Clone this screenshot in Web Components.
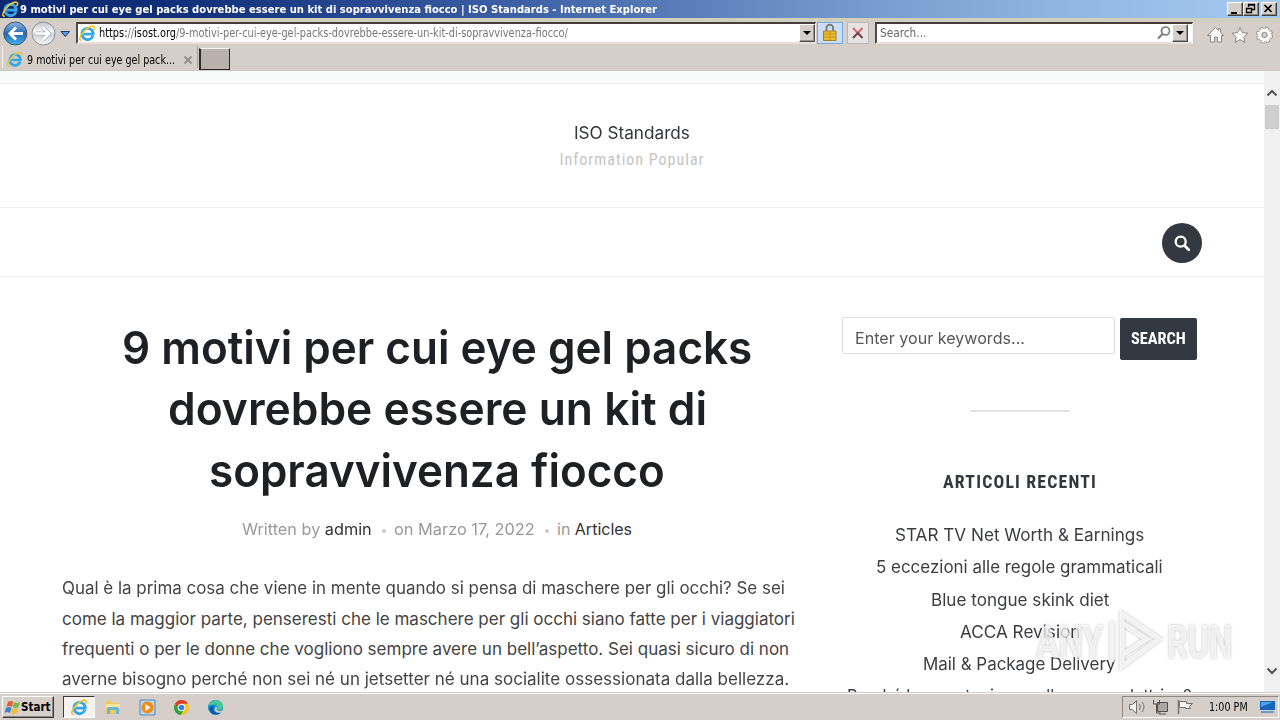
<!DOCTYPE html>
<html lang="it"><head><meta charset="utf-8"><title>ISO Standards</title>
<style>html,body{margin:0;height:100%;overflow:hidden}</style></head><body>
<desktop-screen></desktop-screen>
<script>
const define=(name,html,setup)=>customElements.define(name,class extends HTMLElement{
  constructor(){super();this.attachShadow({mode:'open'}).innerHTML=html}
  connectedCallback(){if(setup)setup(this)}
});

define('desktop-screen',`<style>
:host{display:flex;flex-direction:column;width:1280px;height:720px;overflow:hidden;background:#d5cec9;font-family:"DejaVu Sans Condensed","DejaVu Sans",sans-serif;color:#000}
.view{display:flex;height:621px;flex:none;background:#fff}
</style><title-bar></title-bar><address-row></address-row><tab-row></tab-row>
<div class="view"><site-page></site-page><scroll-bar></scroll-bar></div><task-bar></task-bar>`);

define('ie-logo',`<style>:host{display:block;width:17px;height:17px;flex:none}svg{display:block;width:100%;height:100%}</style>
<svg viewBox="0 0 18 18"><path d="M14.800 11.500A6 6 0 1 1 15 8.300V9.600H5" fill="none" stroke="#35a7e6" stroke-width="3"/><path d="M3 16C-1 17 1 11 6 6S16 0 16.500 2.500c.2.8-.2 1.800-.9 3" fill="none" stroke="#f0c238" stroke-width="1.700"/></svg>`);

define('title-bar',`<style>
:host{display:flex;height:18px;flex:none;align-items:center;box-sizing:border-box;padding:0 3px 0 2px;background:linear-gradient(90deg,#0b276f 0,#12307b 15%,#3c5fa5 40%,#6d91c6 62%,#8fb4e0 82%,#a6caf0);color:#fff;font:bold 11px "DejaVu Sans Condensed","DejaVu Sans",sans-serif}
fit-text{margin-left:1px;margin-right:auto}
b{display:block;width:16px;height:14px;box-sizing:border-box;background:#d5cec9;border:1px solid;border-color:#fff #404040 #404040 #fff;box-shadow:inset -1px -1px #8b8580}
b:last-child{margin-left:2px}svg{display:block;width:13px;height:12px}
</style><ie-logo></ie-logo><fit-text w="637">9 motivi per cui eye gel packs dovrebbe essere un kit di sopravvivenza fiocco | ISO Standards - Internet Explorer</fit-text>
<b><svg viewBox="0 0 13 12"><path d="M3 9h6v2H3z"/></svg></b>
<b><svg viewBox="0 0 13 12"><path d="M4.500 4V1.500h6v5H8M4 2h7M2.500 5.500h5v4h-5zM2 5.500h6" fill="none" stroke="#000" stroke-width="1.300"/></svg></b>
<b><svg viewBox="0 0 13 12"><path d="M2.500 2l7 7m0-7l-7 7" stroke="#000" stroke-width="1.700"/></svg></b>`);

define('address-row',`<style>
:host{display:flex;height:28px;flex:none;box-sizing:border-box;padding:2px 7px 0 3px;align-items:flex-start;font-size:11.500px;background:linear-gradient(#d2cfbd 0 3px,#d5cec9 4px)}
svg{display:block;flex:none}
.field{display:flex;height:22px;box-sizing:border-box;background:#fff;border:solid;border-width:2px 1px 2px 2px;border-color:#493b3b #f6f2ef #e8e0dc #514848;margin-top:2px;align-items:center}
.drop{width:16px;height:18px;box-sizing:border-box;background:#d5cec9;border:1px solid;border-color:#fff #514b48 #514b48 #fff;box-shadow:inset -1px -1px #99918c}
.url{width:740px;margin-left:6px;padding-left:1px;color:#777}.url i{font-style:normal;color:#000}
.search{width:318px;margin-left:6px;padding-left:3px;color:#666}
.btn{width:26px;height:22px;box-sizing:border-box;margin:2px 0 0 1px;border:1px solid #77a9dc;background:#c9dff8}
.stop{width:22px;margin-left:4px;border-color:#b9b6b8;background:#e7e3e4}
.push{margin-left:auto}
</style>
<svg width="54" height="26" viewBox="0 0 54 26"><defs><linearGradient id="g" x2="0" y2="1"><stop stop-color="#8eb6df"/><stop offset=".5" stop-color="#2569b8"/><stop offset="1" stop-color="#42b5ee"/></linearGradient><linearGradient id="h" x2="0" y2="1"><stop stop-color="#bfc2c8"/><stop offset=".4" stop-color="#f4f6f8"/><stop offset=".55" stop-color="#ccd3da"/><stop offset="1" stop-color="#f4f7f9"/></linearGradient></defs>
<circle cx="12.300" cy="13.500" r="11.500" fill="url(#g)" stroke="#40546f"/><path d="M20 13.500H7m6-6l-6 6 6 6" fill="none" stroke="#fff" stroke-width="3"/><circle cx="40.500" cy="13.500" r="11.500" fill="url(#h)" stroke="#8b929b"/><path d="M33 13.500h13m-6-6l6 6-6 6" fill="none" stroke="#a9afb6" stroke-width="4"/><path d="M33 13.500h13m-6-6l6 6-6 6" fill="none" stroke="#fff" stroke-width="2.600"/></svg>
<svg width="13" height="26" viewBox="0 0 13 26"><path d="M4 11.500h8.500l-4.200 5z" fill="#5a9ae0" stroke="#12407b"/></svg>
<div class="field url"><ie-logo></ie-logo><fit-text w="469" style="margin:0 auto 0 3px"><i>https:</i>//<i>isost.org</i>/9-motivi-per-cui-eye-gel-packs-dovrebbe-essere-un-kit-di-sopravvivenza-fiocco/</fit-text>
<svg class="drop" viewBox="0 0 14 16"><path d="M3 6h8l-4 4z"/></svg></div>
<svg class="btn" viewBox="0 0 24 20"><path d="M8.500 8V5a3.300 3.300 0 0 1 6.600 0v3" fill="none" stroke="#77726a" stroke-width="1.700"/><path d="M5.500 8h12.500v9.500H5.500z" fill="#edba22" stroke="#a98029"/><path d="M6 11h12M6 14h12M12 8v9" stroke="#c7962c"/></svg>
<svg class="btn stop" viewBox="0 0 20 20"><path d="M5 5l4.800 5 4.700-5" fill="none" stroke="#d96c6c" stroke-width="2"/><path d="M5 15l4.800-5 4.700 5" fill="none" stroke="#743f45" stroke-width="2"/></svg>
<div class="field search"><fit-text w="46">Search...</fit-text><svg class="push" width="16" height="16" viewBox="0 0 16 16"><circle cx="9.500" cy="6" r="4" fill="none" stroke="#817b7b" stroke-width="1.700"/><path d="M6.500 9L2 13.500" stroke="#817b7b" stroke-width="2.200"/></svg><svg class="drop" style="margin-right:4px" viewBox="0 0 14 16"><path d="M3 6h8l-4 4z"/></svg></div>
<svg class="push" width="68" height="26" viewBox="0 0 68 26" fill="#fff" stroke="#8c8683"><path d="M2.500 15.500l8-8 3 3V8.500h2v4l3 3h-2v6.500h-4v-5h-3v5h-4v-6.500z"/><path d="M35 7.500l2.300 5.300 5.700.5-4.300 3.800 1.300 5.400-5-3-5 3 1.300-5.400-4.300-3.800 5.700-.5z"/><circle cx="59.500" cy="15" r="6" stroke="#8c8683" stroke-width="5" stroke-dasharray="2.900 1.810"/><circle cx="59.500" cy="15" r="6" stroke="#fff" stroke-width="3.400" stroke-dasharray="1.900 2.810" stroke-dashoffset="-.5"/><circle cx="59.500" cy="15" r="4.500" stroke="#fff" stroke-width="3" fill="none"/><circle cx="59.500" cy="15" r="2.700" fill="#d5cec9" stroke="#8c8683"/></svg>`,el=>{
  // The flex row shares its width with the buttons; keep the controls from shrinking.
  el.shadowRoot.querySelectorAll('.field').forEach(f=>f.style.flex='none');
});

define('tab-row',`<style>
:host{display:flex;height:25px;flex:none;padding-left:2px;box-sizing:border-box;align-items:flex-start;font-size:11.500px;border-bottom:1px solid #d0c9c4}
.tab{width:196px;height:22px;display:flex;align-items:center;box-sizing:border-box;border-left:1px solid #f5f1ee;border-right:1px solid #aaa19c;padding:5px 4px 0 4px}
.new{width:31px;height:22px;box-sizing:border-box;border:1px solid #2c2828;border-width:1px 1px 1px 2px;border-top-color:#f8f4f2;background:#bab1ac;margin-left:1px;margin-top:2px}
svg{margin-left:auto}
</style><div class="tab"><ie-logo style="width:16px"></ie-logo><fit-text w="148" style="margin-left:4px">9 motivi per cui eye gel pack...</fit-text><svg width="10" height="10" viewBox="0 0 10 10"><path d="M1.500 1.500l7 7m0-7l-7 7" stroke="#918b88" stroke-width="1.800"/></svg></div><div class="new"></div>`);

define('scroll-bar',`<style>:host{display:flex;flex-direction:column;width:16px;background:#f0f0f0;height:621px}.up{margin-top:12px;height:22px}.thumb{height:24px;background:#cdcdcd;margin:0 1px 0 1px}.down{margin-top:auto;height:29px}svg{display:block}</style>
<svg class="up" width="16" height="22" viewBox="0 0 16 22"><path d="M3.500 12.500L8 8l4.500 4.500" fill="none" stroke="#555" stroke-width="2"/></svg><div class="thumb"></div><svg class="down" width="16" height="29" viewBox="0 0 16 29"><path d="M3.500 5.500L8 10l4.500-4.500" fill="none" stroke="#555" stroke-width="2"/></svg>`);

define('site-page',`<style>
:host{display:block;position:relative;width:1264px;height:621px;overflow:hidden;background:#fff;font-family:Inter,sans-serif;color:#34363d}
.strip{height:12px;background:#f9fafa;border-bottom:1px solid #ececec}
header{height:123px;border-bottom:1px solid #ececec;display:flex;flex-direction:column;align-items:center;box-sizing:content-box}
.name{font-size:17px;line-height:24px;margin-top:37px}
.tag{font:16px/24px "Roboto Condensed",Roboto,sans-serif;color:#c5c5c5;margin-top:3px;letter-spacing:1px}
nav{height:68px;border-bottom:1px solid #ececec;display:flex;justify-content:flex-end;align-items:center;padding-right:62px}
nav svg{display:block;margin-top:2px}
.cols{display:flex;padding-left:62px;gap:30px}
any-run{position:absolute;left:1036px;top:533px}
</style><div class="strip"></div><header><fit-text class="name" w="116">ISO Standards</fit-text><fit-text class="tag" w="145">Information Popular</fit-text></header>
<nav><svg width="40" height="40" viewBox="0 0 40 40"><circle cx="20" cy="20" r="20" fill="#343840"/><circle cx="18.700" cy="18.700" r="5" fill="none" stroke="#fff" stroke-width="2.300"/><path d="M22.500 22.500l4.200 4.200" stroke="#fff" stroke-width="2.800" stroke-linecap="round"/></svg></nav>
<div class="cols"><blog-post></blog-post><side-bar></side-bar></div><any-run></any-run>`);

define('blog-post',`<style>
:host{display:block;width:750px}
h1{margin:0;padding-top:40px;font-weight:600;font-size:45.500px;line-height:61.400px;color:#1f2024;display:flex;flex-direction:column;align-items:center}
.meta{display:flex;justify-content:center;align-items:center;font-size:16px;line-height:24px;margin-top:16px;color:#999}
i{width:4px;height:4px;border-radius:2px;background:#ccc;margin:4px 8px 0 10px}
b{font-weight:400;color:#333}
p{margin:32px 0 0;font-size:17px;line-height:30.400px;color:#444;display:flex;flex-direction:column;align-items:flex-start}
</style><h1><fit-text w="630">9 motivi per cui eye gel packs</fit-text><fit-text w="539">dovrebbe essere un kit di</fit-text><fit-text w="456">sopravvivenza fiocco</fit-text></h1>
<div class="meta"><fit-text w="130">Written by <b>admin</b></fit-text><i></i><fit-text w="141">on Marzo 17, 2022</fit-text><i></i><fit-text w="75">in <b>Articles</b></fit-text></div>
<p><fit-text w="723">Qual è la prima cosa che viene in mente quando si pensa di maschere per gli occhi? Se sei</fit-text><fit-text w="733">come la maggior parte, penseresti che le maschere per gli occhi siano fatte per i viaggiatori</fit-text><fit-text w="727">frequenti o per le donne che vogliono sempre avere un bell’aspetto. Sei quasi sicuro di non</fit-text><fit-text w="727">averne bisogno perché non sei né un jetsetter né una socialite ossessionata dalla bellezza.</fit-text></p>`);

define('side-bar',`<style>
:host{display:flex;flex-direction:column;align-items:center;width:355px;padding-top:40px}
.form{display:flex;width:355px;gap:5px;align-items:flex-start}
.in{width:273px;height:37px;box-sizing:border-box;border:1px solid #ddd;border-radius:2px;padding:5px 0 0 12px;font-size:16px;line-height:30px;color:#555}
.go{width:77px;height:42px;margin-top:1px;border-radius:2px;background:#343840;color:#fff;display:flex;justify-content:center;font:bold 16px/41px "Roboto Condensed",Roboto,sans-serif}
hr{width:100px;height:2px;border:0;background:#e3e3e3;margin:50px 0 57px}
.h{font:bold 18px/26px "Roboto Condensed",Roboto,sans-serif;letter-spacing:1.200px;margin-bottom:24px}
.l{display:flex;flex-direction:column;align-items:center;font-size:17px;line-height:32.300px;color:#3b3d43;white-space:nowrap}
</style><div class="form"><div class="in"><fit-text w="170">Enter your keywords...</fit-text></div><div class="go"><fit-text w="55">SEARCH</fit-text></div></div><hr>
<fit-text class="h" w="154">ARTICOLI RECENTI</fit-text>
<div class="l"><fit-text w="249">STAR TV Net Worth &amp; Earnings</fit-text><fit-text w="287">5 eccezioni alle regole grammaticali</fit-text><fit-text w="178">Blue tongue skink diet</fit-text><fit-text w="120">ACCA Revision</fit-text><fit-text w="193">Mail &amp; Package Delivery</fit-text><fit-text w="345">Perché la sua stagione sulla nuova elettrica?</fit-text></div>`);

define('any-run',`<style>:host{display:flex;width:210px;height:75px;align-items:center;font:bold 47px/75px Roboto,sans-serif;color:#ffffffb8;filter:drop-shadow(0 0 1.500px #0005)}svg{flex:none;margin:0 2px}</style>
<fit-text w="67">ANY</fit-text><svg width="60" height="72" viewBox="0 0 60 72" fill="none" stroke="#ffffffc8" stroke-width="5"><path d="M7 16v40M17 48V8l37 25-37 27V49l24-16-24-16"/></svg><fit-text w="65">RUN</fit-text>`);

define('task-bar',`<style>
:host{display:flex;height:28px;flex:none;box-sizing:border-box;border-top:1px solid #d5cec9;box-shadow:inset 0 1px #fff;padding:3px 1px 2px 2px;align-items:center;background:#d5cec9;font-size:11.500px}
.start{display:flex;align-items:center;width:52px;height:22px;box-sizing:border-box;border:1px solid;border-color:#fff #3d3936 #3d3936 #fff;box-shadow:inset -1px -1px #8e8883;font-weight:bold;padding-left:1px}
.on{display:flex;width:32px;height:22px;box-sizing:border-box;margin-left:9px;background:#f5f2f0;border:1px solid;border-color:#3d3936 #fff #fff #3d3936;justify-content:center;align-items:center}
.app{margin-left:17px}.tray{display:flex;align-items:center;margin-left:auto;height:22px;width:157px;box-sizing:border-box;border:1px solid;border-color:#8e8883 #fff #fff #8e8883}
svg{display:block;flex:none}
</style><div class="start"><svg width="17" height="17" viewBox="0 0 17 17"><path d="M4 3q3-2 5 0L8 8Q5 6 2.500 8z" fill="#e95b2b"/><path d="M10 3q3 2 6 0l-1.500 5q-3 2-5.500 0z" fill="#79b648"/><path d="M2 9q3-2 5.500 0L6 14q-3-2-5.500 0z" fill="#3b83ca"/><path d="M8.500 9q3 2 5.500 0l-1.500 5q-3 2-5.500 0z" fill="#f5bd32"/></svg><fit-text w="29">Start</fit-text></div>
<div class="on"><ie-logo></ie-logo></div>
<svg style="margin-left:9px" width="18" height="18" viewBox="0 0 18 18"><path d="M2 3h6l1 2h7v11H2z" fill="#eecb62"/><path d="M2 6h14v4H2z" fill="#f9e69b"/><path d="M3 16v-5q0-2 2-2h8q2 0 2 2v5h-3v-4H6v4z" fill="#69b6d9"/></svg>
<svg class="app" width="17" height="17" viewBox="0 0 17 17"><path d="M1 1h15v15H1z" fill="#b7d7f0" stroke="#5389ba"/><circle cx="8.500" cy="8.500" r="6" fill="#f18a16"/><path d="M6.500 5v7l5-3.500z" fill="#fff"/></svg>
<svg class="app" width="17" height="17" viewBox="0 0 18 18"><circle cx="9" cy="9" r="8" fill="#f7c51e"/><path d="M2.100 5A8 8 0 0 1 16 5H9L6 11z" fill="#df3b2e"/><path d="M2.100 5A8 8 0 0 0 8 17l4-6H6z" fill="#38a04b"/><circle cx="9" cy="9" r="4" fill="#fff"/><circle cx="9" cy="9" r="3" fill="#397ee2"/></svg>
<svg class="app" width="17" height="17" viewBox="0 0 18 18"><circle cx="9" cy="9" r="8" fill="#1688d1"/><path d="M1 8C3-1 17-1 17 8c0 4-4 4-6 3 1-3-2-6-5-5-2 0-4 1-5 2z" fill="#43c8a0"/><path d="M7 8c-2 5 2 8 8 6-5 5-14 1-12-5 1-2 3-2 4-1z" fill="#0e56a6"/><path d="M9 8q3 1 1 3 3 3 7 1l-1 2q-6 2-8-2z" fill="#d5cec9"/></svg>
<div class="tray"><svg width="76" height="20" viewBox="0 0 76 20" fill="#f5f2ef" stroke="#77716e"><path d="M6.500 7.500h3l4-4v13l-4-4h-3z"/><path d="M16.500 7q2 3 0 6M19 5q4 5 0 10" fill="none"/><path d="M34.500 5.500h10v9h-10zM36 17h7" fill="#aaa6a4" stroke="#55514f"/><path d="M30.500 3v4h6V3M33.500 7v9h4" fill="none" stroke="#55514f"/><path d="M55.500 3v14" stroke-width="1.500"/><path d="M56.500 4.500h7v2h6l-3 3 1 2h-5v-1h-6z"/></svg><fit-text w="39" style="margin-left:10px">1:00 PM</fit-text><svg style="margin-left:12px" width="15" height="14" viewBox="0 0 15 14"><path d="M0 1h15v9H0z" fill="#1764b9"/><path d="M1 2h12L1 7z" fill="#4fa2e6"/><path d="M1 11h13v2H1z" fill="#6f9aca"/></svg></div>`);

define('fit-text',`<style>:host{display:inline-block;white-space:nowrap;flex:none}span{display:inline-block;transform-origin:0 50%}</style><span><slot></slot></span>`,el=>{
  const w=+el.getAttribute('w'),s=el.shadowRoot.querySelector('span'),natural=s.offsetWidth;
  el.style.width=w+'px';
  s.style.transform=`scaleX(${w/natural})`;
});
</script></body></html>
